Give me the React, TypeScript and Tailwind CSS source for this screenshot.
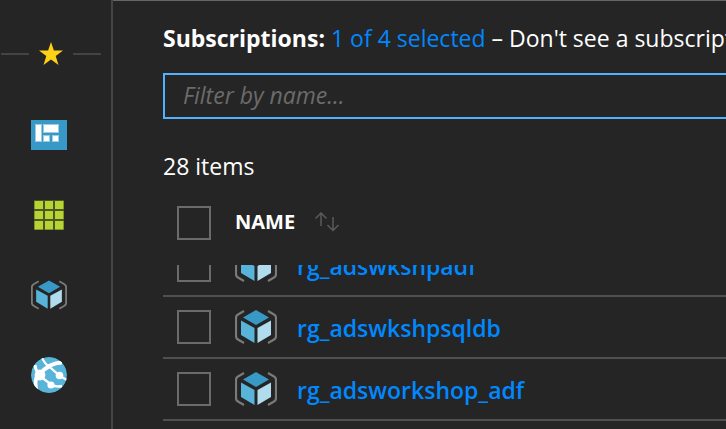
import React from "react";

const CubeIcon = ({ className }: { className: string }) => (
  <svg viewBox="0 0 42 34" className={className} aria-hidden="true" fill="none">
    <path d="M9 1 3 4.500Q1 5.500 1 8v18q0 2.500 2 3.500L9 33M33 1l6 3.500q2 1 2 3.500v18q0 2.500-2 3.500L33 33" stroke="#7a7a7a" strokeWidth="2.200" />
    <path d="M21 0 34 7.500 21 15 8 7.500Z" fill="#3999c6" />
    <path d="M6 10.500 19.500 18V33L6 25Z" fill="#59b4d9" />
    <path d="M36 10.500 22.500 18V33L36 25Z" fill="#b0dcee" />
  </svg>
);

const DashboardIcon = () => (
  <svg viewBox="0 0 36 30" className="h-[30px] w-9" aria-hidden="true">
    <path d="M0 0h36v30H0z" fill="#3999c6" />
    <path d="M4 4h7v18H4zM12 4h16v9H12zM12 15h7v7h-7zM21 15h7v7h-7z" fill="#9bcce3" />
    <path d="M5 5h5v16H5zM13 5h14v7H13zM13 16h5v5h-5zM22 16h5v5h-5z" fill="#fff" />
  </svg>
);

const GridIcon = () => (
  <svg viewBox="0 0 30 30" className="size-[30px]" aria-hidden="true">
    <path d="M0 0h30v30H0z" fill="#4b5622" />
    <path d="M.5 1h8.500v8H.5zM11 1h8v8h-8zM21 1h8.500v8H21zM.5 11h8.500v8H.5zM11 11h8v8h-8zM21 11h8.500v8H21zM.5 21h8.500v8.500H.5zM11 21h8v8.500h-8zM21 21h8.500v8.500H21z" fill="#b8d432" />
  </svg>
);

const GlobeIcon = () => (
  <svg viewBox="0 0 36 36" className="size-9" aria-hidden="true">
    <defs>
      <clipPath id="globe">
        <circle cx="18" cy="18" r="18" />
      </clipPath>
    </defs>
    <g clipPath="url(#globe)">
      <circle cx="18" cy="18" r="18" fill="#59b4d9" />
      <g fill="none" stroke="#fff">
        <path d="M9 17Q18 6 31 5.500" strokeWidth="3.800" />
        <path d="M11 1q3 6 7 8.500L29 19l8 4.500" strokeWidth="2.200" />
        <path d="M9 18Q5 15 4 8" strokeWidth="3" />
        <path d="M7 17Q3 24 5.500 33" strokeWidth="3.800" />
        <path d="M9 19l11 8.500q5 3 11 1.500" strokeWidth="2.400" />
      </g>
      <g fill="#fff">
        <circle cx="9" cy="18" r="5.400" />
        <circle cx="28.500" cy="18.500" r="3.800" />
        <circle cx="20" cy="28" r="3.600" />
      </g>
    </g>
  </svg>
);

const favourites = [
  { label: "Dashboard", icon: <DashboardIcon /> },
  { label: "All resources", icon: <GridIcon /> },
  { label: "Resource groups", icon: <CubeIcon className="h-[30px] w-9" /> },
  { label: "App Services", icon: <GlobeIcon /> },
];

const groups = ["rg_adswkshpadf", "rg_adswkshpsqldb", "rg_adsworkshop_adf"];

const Checkbox = ({ label }: { label: string }) => (
  <input
    type="checkbox"
    aria-label={label}
    className="block size-[34px] appearance-none border-2 border-[#6b6b6b] checked:bg-[#0088ff]"
  />
);

export default function App() {
  return (
    <div className="flex h-screen overflow-hidden bg-[#252525] font-['Open_Sans','Noto_Sans',sans-serif] text-[23px] leading-[30px] text-white">
      <aside className="w-[113px] shrink-0 border-r-2 border-[#444] pt-3">
        <div className="flex h-[83px] items-center justify-between pl-px pr-2.5">
          <span className="h-0.5 w-7 bg-[#444]" />
          <svg viewBox="0 0 24 24" className="size-6" aria-hidden="true">
            <path d="M12 0l2.900 8.600H24l-7.300 5.300L19.500 23 12 17.400 4.500 23l2.800-9.100L0 8.600h9.100Z" fill="#fcd116" />
          </svg>
          <span className="h-0.5 w-7 bg-[#444]" />
        </div>
        <nav className="pr-[13px]">
          {favourites.map((item) => (
            <a key={item.label} href="#" aria-label={item.label} className="flex h-20 items-center justify-center">
              {item.icon}
            </a>
          ))}
        </nav>
      </aside>

      <main className="min-w-0 flex-1 overflow-hidden border-t border-[#666] pl-[50px] pt-[22px]">
        <p className="whitespace-nowrap">
          <strong className="font-bold">Subscriptions:</strong>
          <a href="#" className="ml-1.5 text-[#0088ff]">1 of 4 selected</a>
          <span> – Don't see a subscription?</span>
        </p>
        <input
          type="text"
          aria-label="Filter by name"
          placeholder="Filter by name..."
          className="mt-5 block h-[46px] w-full border-2 border-r-0 border-[#55b0ff] bg-transparent px-[18px] pb-0.5 outline-none placeholder:italic placeholder:text-[#6b6b6b]"
        />
        <p className="mt-8">28 items</p>

        <table className="mt-[25px] w-full">
          <thead>
            <tr className="text-left">
              <th className="w-[72px] pl-3.5">
                <Checkbox label="Select all" />
              </th>
              <th className="pb-0.5 text-xl font-bold">
                <button type="button" className="flex items-center gap-5">
                  NAME
                  <svg viewBox="0 0 24 20" className="h-5 w-6" fill="none" stroke="#5a5a5a" strokeWidth="1.500" aria-hidden="true">
                    <path d="M6 14V1M.5 6.500 6 1l5.500 5.500M18 5v13.500M12.500 13l5.500 5.500L23.500 13" />
                  </svg>
                </button>
              </th>
            </tr>
          </thead>
        </table>

        <div className="mt-[25px] overflow-hidden">
          <table className="-mt-[30px] w-full border-collapse">
            <tbody>
              {groups.map((name) => (
                <tr key={name} className="h-[62px] shadow-[inset_0_-2px_0_#505050]">
                  <td className="w-[72px] pb-0.5 pl-3.5">
                    <Checkbox label={"Select " + name} />
                  </td>
                  <td className="w-[62px] pb-0.5">
                    <CubeIcon className="h-[34px] w-[42px]" />
                  </td>
                  <td>
                    <a href="#" className="font-semibold text-[#0088ff]">{name}</a>
                  </td>
                </tr>
              ))}
            </tbody>
          </table>
        </div>
      </main>
    </div>
  );
}
